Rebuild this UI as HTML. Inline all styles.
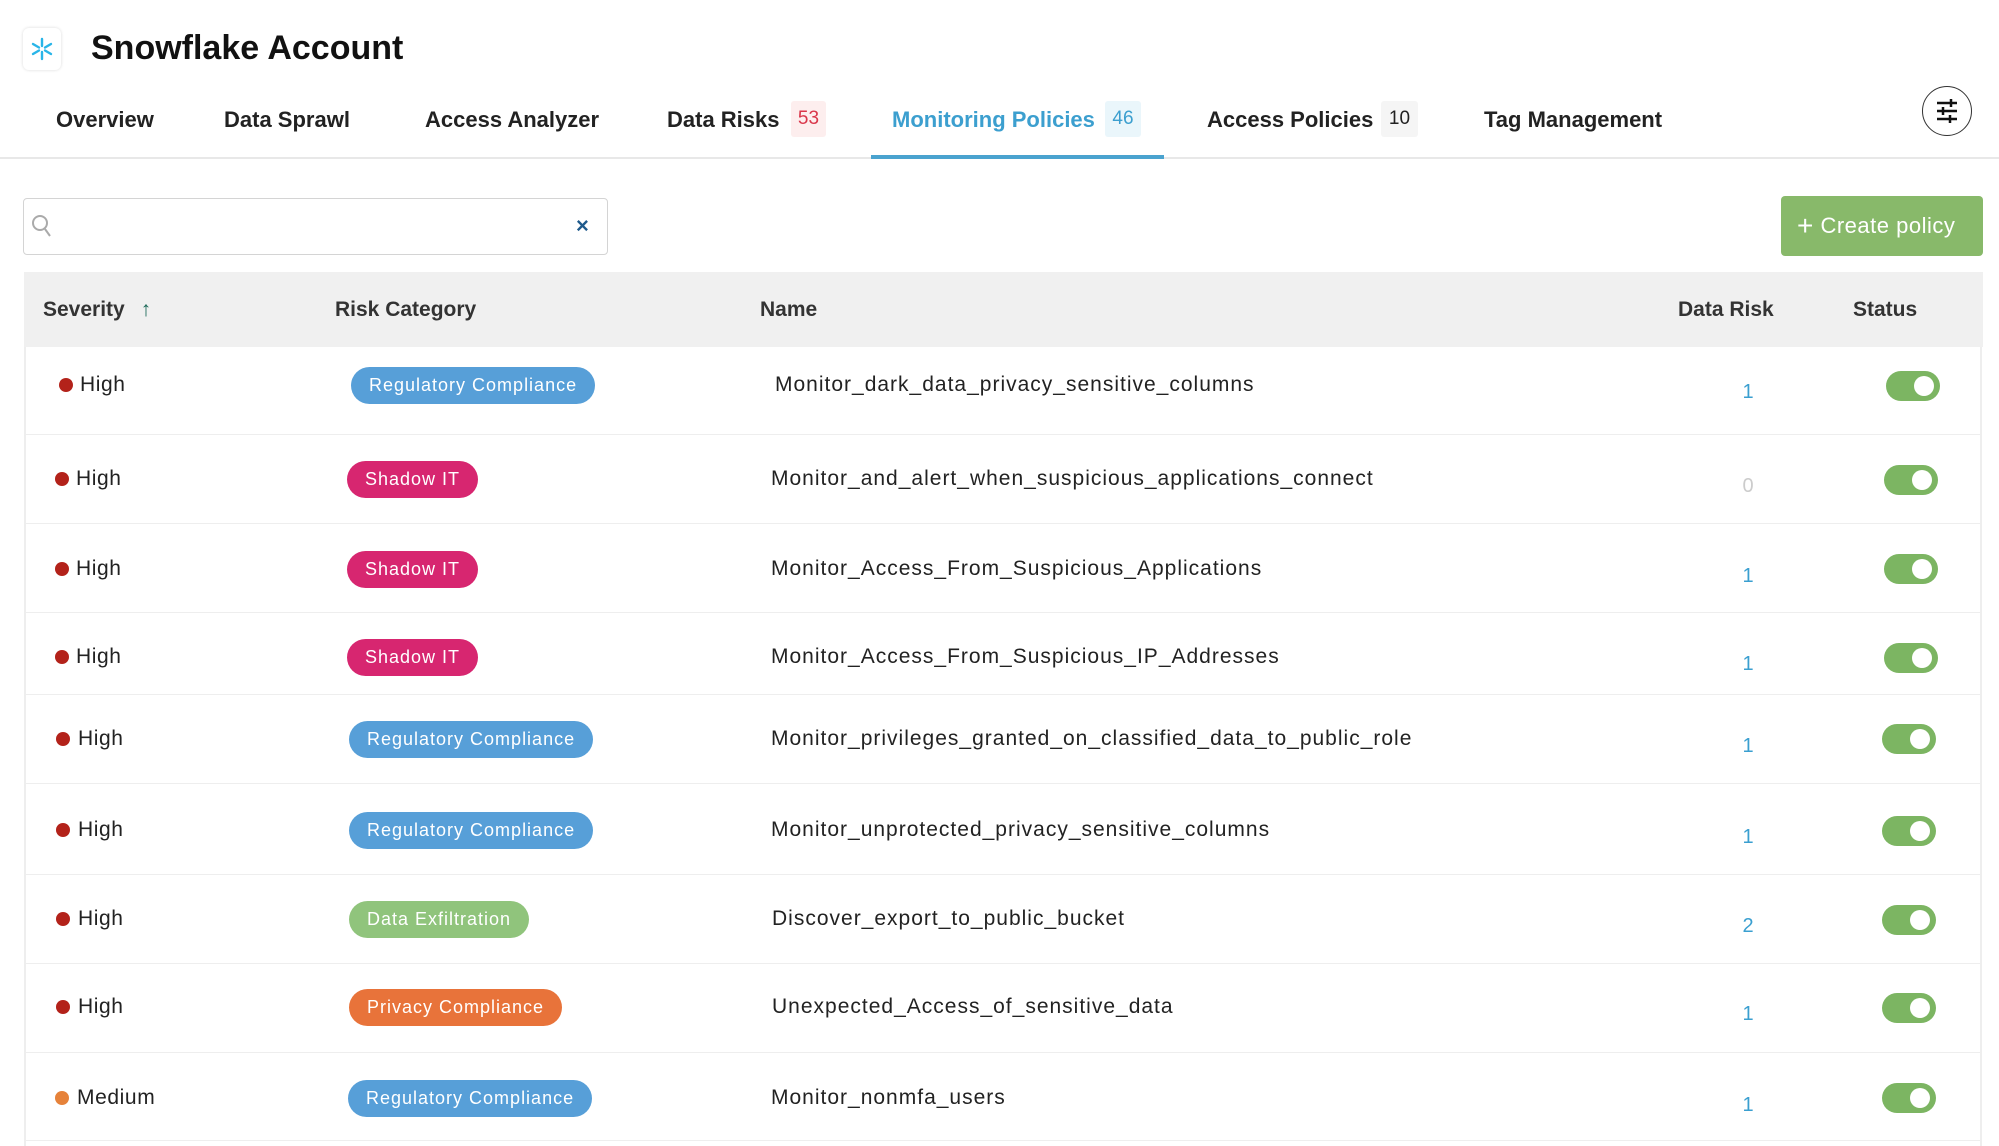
<!DOCTYPE html>
<html><head><meta charset="utf-8"><style>
*{box-sizing:border-box;margin:0;padding:0}
body{width:1999px;height:1146px;background:#fff;font-family:"Liberation Sans",sans-serif;color:#222;position:relative;overflow:hidden}
.a{position:absolute;white-space:nowrap}
.tab{position:absolute;top:107px;font-size:22px;font-weight:bold;color:#222}
.badge{position:absolute;top:101px;height:36px;font-size:19px;line-height:36px;text-align:center;border-radius:3px}
.th{position:absolute;top:298px;font-size:21px;font-weight:bold;color:#333}
.row{position:absolute;left:24px;width:1957px;border-bottom:1.5px solid #eee}
.dot{position:absolute;width:14px;height:14px;border-radius:50%;background:#b3221a}
.sev{position:absolute;font-size:21px;color:#222;letter-spacing:.6px}
.pill{position:absolute;height:37px;line-height:37px;border-radius:19px;color:#fff;font-size:18px;padding:0 18px;letter-spacing:1px}
.nm{position:absolute;font-size:21px;color:#222;letter-spacing:1px}
.dr{position:absolute;left:1738px;font-size:20px;color:#3a9fd0;width:20px;text-align:center}
.tg{position:absolute;left:1884px;width:54px;height:30px;border-radius:15px;background:#7cb562}
.tg::after{content:"";position:absolute;right:6px;top:5px;width:20px;height:20px;border-radius:50%;background:#fff}
</style></head><body>
<div class="a" style="left:23px;top:28px;width:38px;height:42px;border-radius:6px;box-shadow:0 0 3px rgba(0,0,0,.15);"></div>
<svg class="a" style="left:30px;top:37px" width="24" height="24" viewBox="0 0 24 24" stroke="#29b5e8" stroke-width="2.4" stroke-linecap="round"><path d="M12 2v7M12 15v7M3 7l6 3.5M15 13.5l6 3.5M3 17l6-3.5M15 10.5l6-3.5"/></svg>
<div class="a" style="left:91px;top:29px;font-size:34px;font-weight:bold;color:#111">Snowflake Account</div>
<div class="tab" style="left:56px">Overview</div>
<div class="tab" style="left:224px">Data Sprawl</div>
<div class="tab" style="left:425px">Access Analyzer</div>
<div class="tab" style="left:667px">Data Risks</div>
<div class="badge" style="left:791px;width:35px;background:#fdeeee;color:#d9364a">53</div>
<div class="tab" style="left:892px;color:#3c9fcf">Monitoring Policies</div>
<div class="badge" style="left:1105px;width:36px;background:#eaf6fb;color:#3c9fcf">46</div>
<div class="tab" style="left:1207px">Access Policies</div>
<div class="badge" style="left:1381px;width:37px;background:#f5f5f5;color:#222">10</div>
<div class="tab" style="left:1484px">Tag Management</div>
<div class="a" style="left:0;top:157px;width:1999px;height:2px;background:#e8e8e8"></div>
<div class="a" style="left:871px;top:155px;width:293px;height:4px;background:#4aa3cf"></div>
<div class="a" style="left:1922px;top:86px;width:50px;height:50px;border:1.5px solid #333;border-radius:50%"></div>
<svg class="a" style="left:1935px;top:98px" width="24" height="26" viewBox="0 0 24 26" stroke="#111" stroke-width="2.5"><path d="M2 5h20M2 13h20M2 21h20M16 1v8M8 9v8M15 17v8"/></svg>
<div class="a" style="left:23px;top:198px;width:585px;height:57px;border:1.5px solid #d4d4d4;border-radius:4px"></div>
<svg class="a" style="left:31px;top:214px" width="22" height="26" viewBox="0 0 22 26" stroke="#aaa" stroke-width="2" fill="none"><circle cx="9" cy="9" r="7"/><path d="M14 15l5 7"/></svg>
<div class="a" style="left:576px;top:213px;font-size:22px;font-weight:bold;color:#1f5a8c">×</div>
<div class="a" style="left:1781px;top:196px;width:202px;height:60px;background:#88b96a;border-radius:4px;color:#fff;font-size:22px;line-height:60px;padding-left:16px;letter-spacing:.5px"><span style="font-size:28px;vertical-align:-2px">+</span> Create policy</div>
<div class="a" style="left:24px;top:272px;width:1959px;height:75px;background:#f0f0f0"></div>
<div class="a" style="left:24px;top:347px;width:1.5px;height:799px;background:#eee"></div>
<div class="a" style="left:1980px;top:347px;width:1.5px;height:799px;background:#eee"></div>
<div class="th" style="left:43px">Severity <span style="color:#1f6b5a;margin-left:10px">↑</span></div>
<div class="th" style="left:335px">Risk Category</div>
<div class="th" style="left:760px">Name</div>
<div class="th" style="left:1678px">Data Risk</div>
<div class="th" style="left:1853px">Status</div>

<div class="row" style="top:347px;height:88px"></div>
<div class="row" style="top:435px;height:89px"></div>
<div class="row" style="top:524px;height:89px"></div>
<div class="row" style="top:613px;height:82px"></div>
<div class="row" style="top:695px;height:89px"></div>
<div class="row" style="top:784px;height:91px"></div>
<div class="row" style="top:875px;height:89px"></div>
<div class="row" style="top:964px;height:89px"></div>
<div class="row" style="top:1053px;height:88px"></div>

<div class="dot" style="left:59px;top:378px"></div><div class="sev" style="left:80px;top:373px">High</div>
<div class="pill" style="left:351px;top:367px;background:#579fd8">Regulatory Compliance</div>
<div class="nm" style="left:775px;top:373px">Monitor_dark_data_privacy_sensitive_columns</div>
<div class="dr" style="top:381px">1</div><div class="tg" style="top:371px;left:1886px"></div>

<div class="dot" style="left:55px;top:472px"></div><div class="sev" style="left:76px;top:467px">High</div>
<div class="pill" style="left:347px;top:461px;background:#d72670">Shadow IT</div>
<div class="nm" style="left:771px;top:467px">Monitor_and_alert_when_suspicious_applications_connect</div>
<div class="dr" style="top:475px;color:#ccc">0</div><div class="tg" style="top:465px"></div>

<div class="dot" style="left:55px;top:562px"></div><div class="sev" style="left:76px;top:557px">High</div>
<div class="pill" style="left:347px;top:551px;background:#d72670">Shadow IT</div>
<div class="nm" style="left:771px;top:557px">Monitor_Access_From_Suspicious_Applications</div>
<div class="dr" style="top:565px">1</div><div class="tg" style="top:554px"></div>

<div class="dot" style="left:55px;top:650px"></div><div class="sev" style="left:76px;top:645px">High</div>
<div class="pill" style="left:347px;top:639px;background:#d72670">Shadow IT</div>
<div class="nm" style="left:771px;top:645px">Monitor_Access_From_Suspicious_IP_Addresses</div>
<div class="dr" style="top:653px">1</div><div class="tg" style="top:643px"></div>

<div class="dot" style="left:56px;top:732px"></div><div class="sev" style="left:78px;top:727px">High</div>
<div class="pill" style="left:349px;top:721px;background:#579fd8">Regulatory Compliance</div>
<div class="nm" style="left:771px;top:727px">Monitor_privileges_granted_on_classified_data_to_public_role</div>
<div class="dr" style="top:735px">1</div><div class="tg" style="top:724px;left:1882px"></div>

<div class="dot" style="left:56px;top:823px"></div><div class="sev" style="left:78px;top:818px">High</div>
<div class="pill" style="left:349px;top:812px;background:#579fd8">Regulatory Compliance</div>
<div class="nm" style="left:771px;top:818px">Monitor_unprotected_privacy_sensitive_columns</div>
<div class="dr" style="top:826px">1</div><div class="tg" style="top:816px;left:1882px"></div>

<div class="dot" style="left:56px;top:912px"></div><div class="sev" style="left:78px;top:907px">High</div>
<div class="pill" style="left:349px;top:901px;background:#90c47c">Data Exfiltration</div>
<div class="nm" style="left:772px;top:907px">Discover_export_to_public_bucket</div>
<div class="dr" style="top:915px">2</div><div class="tg" style="top:905px;left:1882px"></div>

<div class="dot" style="left:56px;top:1000px"></div><div class="sev" style="left:78px;top:995px">High</div>
<div class="pill" style="left:349px;top:989px;background:#e8733a">Privacy Compliance</div>
<div class="nm" style="left:772px;top:995px">Unexpected_Access_of_sensitive_data</div>
<div class="dr" style="top:1003px">1</div><div class="tg" style="top:993px;left:1882px"></div>

<div class="dot" style="left:55px;top:1091px;background:#e6823a"></div><div class="sev" style="left:77px;top:1086px">Medium</div>
<div class="pill" style="left:348px;top:1080px;background:#579fd8">Regulatory Compliance</div>
<div class="nm" style="left:771px;top:1086px">Monitor_nonmfa_users</div>
<div class="dr" style="top:1094px">1</div><div class="tg" style="top:1083px;left:1882px"></div>
</body></html>
